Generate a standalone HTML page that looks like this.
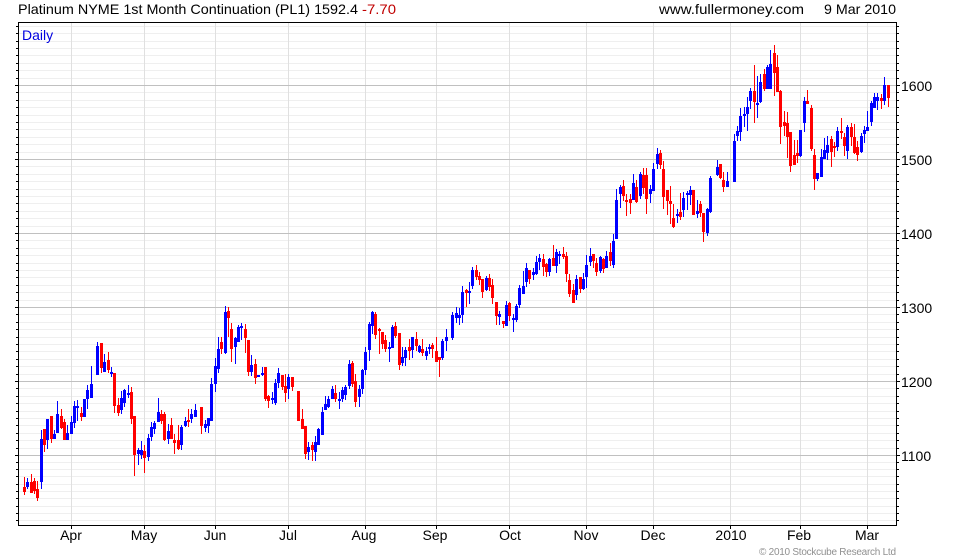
<!DOCTYPE html>
<html lang="en">
<head>
<meta charset="utf-8">
<title>Platinum NYME 1st Month Continuation</title>
<style>
html,body{margin:0;padding:0;background:#fff}
svg{display:block}
text{font-family:"Liberation Sans",Arial,sans-serif;font-size:14px;fill:#000}
</style>
</head>
<body>
<svg width="980" height="560" viewBox="0 0 980 560" xmlns="http://www.w3.org/2000/svg" shape-rendering="crispEdges">
<defs>
<path id="m" d="M0 26.5H980M0 33.5H980M0 41.5H980M0 48.5H980M0 55.5H980M0 63.5H980M0 70.5H980M0 78.5H980M0 92.5H980M0 100.5H980M0 107.5H980M0 115.5H980M0 122.5H980M0 129.5H980M0 137.5H980M0 144.5H980M0 152.5H980M0 166.5H980M0 174.5H980M0 181.5H980M0 189.5H980M0 196.5H980M0 203.5H980M0 211.5H980M0 218.5H980M0 226.5H980M0 240.5H980M0 248.5H980M0 255.5H980M0 263.5H980M0 270.5H980M0 277.5H980M0 285.5H980M0 292.5H980M0 300.5H980M0 314.5H980M0 322.5H980M0 329.5H980M0 337.5H980M0 344.5H980M0 351.5H980M0 359.5H980M0 366.5H980M0 374.5H980M0 388.5H980M0 396.5H980M0 403.5H980M0 411.5H980M0 418.5H980M0 425.5H980M0 433.5H980M0 440.5H980M0 448.5H980M0 462.5H980M0 469.5H980M0 476.5H980M0 484.5H980M0 491.5H980M0 498.5H980M0 506.5H980M0 513.5H980M0 520.5H980"/>
<path id="j" d="M0 85.5H980M0 159.5H980M0 233.5H980M0 307.5H980M0 381.5H980M0 455.5H980"/>
</defs>
<use href="#m" fill="none" stroke="#efefef" stroke-dasharray="0 19 877 84"/>
<path fill="none" stroke="#e0e0e0" d="M71.5 23V525M144.5 23V525M215.5 23V525M288.5 23V525M365.5 23V525M436.5 23V525M509.5 23V525M586.5 23V525M653.5 23V525M730.5 23V525M800.5 23V525M867.5 23V525"/>
<use href="#j" fill="none" stroke="#c0c0c0" stroke-dasharray="0 19 877 84"/>

<path fill="#f00" d="M23 487H26V492H23zM24 477H25V495H24z"/>
<path fill="#00f" d="M26 482H29V487H26zM27 478H28V489H27z"/>
<path fill="#f00" d="M30 482H33V493H30zM31 474H32V493H31zM33 481H36V491H33zM34 478H35V494H34zM36 489H39V498H36zM37 481H38V501H37z"/>
<path fill="#00f" d="M40 439H43V482H40zM41 430H42V489H41z"/>
<path fill="#f00" d="M43 429H46V445H43zM44 429H45V452H44z"/>
<path fill="#00f" d="M46 419H49V440H46zM47 419H48V449H47z"/>
<path fill="#f00" d="M50 416H53V439H50zM51 416H52V443H51z"/>
<path fill="#00f" d="M53 434H56V439H53zM54 430H55V439H54zM56 414H59V433H56zM57 401H58V433H57z"/>
<path fill="#f00" d="M60 416H63V428H60zM61 409H62V429H61zM63 422H66V440H63zM64 419H65V440H64z"/>
<path fill="#00f" d="M66 433H69V440H66zM67 425H68V440H67zM70 422H73V434H70zM71 416H72V434H71zM73 406H76V423H73zM74 401H75V428H74zM76 406H79V408H76zM77 400H78V421H77z"/>
<path fill="#f00" d="M80 413H83V417H80zM81 407H82V421H81z"/>
<path fill="#00f" d="M83 399H86V417H83zM84 399H85V417H84zM86 390H89V399H86zM87 385H88V409H87zM90 384H93V398H90zM91 366H92V398H91zM96 346H99V375H96zM97 342H98V375H97z"/>
<path fill="#f00" d="M100 343H103V368H100zM101 343H102V373H101z"/>
<path fill="#00f" d="M103 362H106V372H103zM104 354H105V372H104z"/>
<path fill="#f00" d="M107 360H110V370H107zM108 352H109V373H108z"/>
<path fill="#00f" d="M110 372H113V374H110zM111 367H112V377H111z"/>
<path fill="#f00" d="M113 373H116V406H113zM114 373H115V413H114zM117 405H120V413H117zM118 398H119V416H118z"/>
<path fill="#00f" d="M120 398H123V410H120zM121 391H122V414H121zM123 390H126V403H123zM124 389H125V407H124zM127 393H130V395H127zM128 385H129V398H128z"/>
<path fill="#f00" d="M130 392H133V419H130zM131 387H132V424H131zM133 416H136V455H133zM134 416H135V476H134z"/>
<path fill="#00f" d="M137 450H140V454H137zM138 448H139V465H138zM140 450H143V455H140zM141 441H142V459H141z"/>
<path fill="#f00" d="M143 451H146V458H143zM144 445H145V473H144z"/>
<path fill="#00f" d="M147 438H150V457H147zM148 434H149V461H148zM150 427H153V437H150zM151 422H152V441H151zM153 423H156V429H153zM154 421H155V434H154zM157 412H160V422H157zM158 398H159V422H158z"/>
<path fill="#f00" d="M160 414H163V421H160zM161 410H162V424H161zM163 414H166V440H163zM164 412H165V441H164z"/>
<path fill="#00f" d="M167 431H170V439H167zM168 424H169V444H168z"/>
<path fill="#f00" d="M170 425H173V439H170zM171 418H172V439H171zM173 440H176V443H173zM174 434H175V454H174zM177 440H180V449H177zM178 425H179V450H178z"/>
<path fill="#00f" d="M180 427H183V445H180zM181 425H182V450H181zM184 421H187V426H184zM185 417H186V427H185z"/>
<path fill="#f00" d="M187 420H190V422H187zM188 409H189V427H188z"/>
<path fill="#00f" d="M190 414H193V419H190zM191 409H192V423H191zM194 410H197V417H194zM195 404H196V417H195z"/>
<path fill="#f00" d="M200 407H203V426H200zM201 407H202V434H201z"/>
<path fill="#00f" d="M204 424H207V428H204zM205 420H206V432H205zM207 418H210V426H207zM208 418H209V433H208zM210 384H213V421H210zM211 378H212V421H211zM214 366H217V384H214zM215 358H216V392H215zM217 349H220V369H217zM218 337H219V373H218z"/>
<path fill="#f00" d="M220 342H223V349H220zM221 337H222V354H221z"/>
<path fill="#00f" d="M224 312H227V353H224zM225 306H226V354H225z"/>
<path fill="#f00" d="M227 311H230V318H227zM228 307H229V337H228zM230 329H233V349H230zM231 323H232V362H231z"/>
<path fill="#00f" d="M234 338H237V347H234zM235 337H236V364H235zM237 327H240V342H237zM238 325H239V342H238zM240 326H243V328H240zM241 323H242V340H241z"/>
<path fill="#f00" d="M244 329H247V338H244zM245 324H246V353H245zM247 340H250V372H247zM248 340H249V376H248z"/>
<path fill="#00f" d="M250 365H253V372H250zM251 355H252V376H251z"/>
<path fill="#f00" d="M254 364H257V378H254zM255 359H256V384H255z"/>
<path fill="#00f" d="M257 375H260V377H257zM258 375H259V377H258zM261 373H264V375H261zM262 367H263V376H262z"/>
<path fill="#f00" d="M264 367H267V399H264zM265 367H266V401H265zM267 396H270V401H267zM268 395H269V408H268z"/>
<path fill="#00f" d="M271 398H274V400H271zM272 392H273V404H272zM274 383H277V403H274zM275 379H276V405H275zM277 373H280V383H277zM278 368H279V388H278z"/>
<path fill="#f00" d="M281 375H284V387H281zM282 375H283V390H282zM284 386H287V393H284zM285 374H286V402H285z"/>
<path fill="#00f" d="M287 377H290V389H287zM288 374H289V399H288z"/>
<path fill="#f00" d="M291 377H294V387H291zM292 377H293V391H292zM297 391H300V421H297zM298 391H299V421H298zM301 419H304V429H301zM302 409H303V429H302zM304 426H307V454H304zM305 426H306V459H305z"/>
<path fill="#00f" d="M307 447H310V452H307zM308 442H309V460H308z"/>
<path fill="#f00" d="M311 445H314V450H311zM312 442H313V461H312z"/>
<path fill="#00f" d="M314 442H317V452H314zM315 436H316V461H315zM317 429H320V445H317zM318 428H319V445H318zM321 412H324V435H321zM322 407H323V435H322zM324 404H327V410H324zM325 396H326V410H325zM327 399H330V407H327zM328 396H329V408H328zM331 389H334V399H331zM332 386H333V399H332z"/>
<path fill="#f00" d="M334 393H337V399H334zM335 385H336V402H335z"/>
<path fill="#00f" d="M338 399H341V401H338zM339 392H340V409H339zM341 390H344V399H341zM342 387H343V402H342zM344 387H347V395H344zM345 385H346V400H345zM348 364H351V386H348zM349 360H350V389H349z"/>
<path fill="#f00" d="M351 363H354V384H351zM352 361H353V387H352zM354 381H357V402H354zM355 374H356V407H355z"/>
<path fill="#00f" d="M358 389H361V397H358zM359 385H360V407H359zM361 370H364V389H361zM362 369H363V394H362zM364 352H367V370H364zM365 347H366V375H365zM368 324H371V350H368zM369 322H370V361H369zM371 312H374V326H371zM372 311H373V334H372z"/>
<path fill="#f00" d="M374 314H377V335H374zM375 312H376V339H375zM378 329H381V331H378zM379 328H380V354H379zM381 332H384V344H381zM382 332H383V349H382zM384 340H387V349H384zM385 335H386V352H385z"/>
<path fill="#00f" d="M388 347H391V349H388zM389 342H390V362H389zM391 327H394V348H391zM392 325H393V348H392z"/>
<path fill="#f00" d="M394 326H397V336H394zM395 322H396V338H395zM398 333H401V365H398zM399 333H400V370H399z"/>
<path fill="#00f" d="M401 357H404V363H401zM402 347H403V366H402zM404 350H407V358H404zM405 347H406V366H405z"/>
<path fill="#f00" d="M408 347H411V351H408zM409 339H410V360H409z"/>
<path fill="#00f" d="M411 337H414V350H411zM412 337H413V358H412z"/>
<path fill="#f00" d="M415 339H418V346H415zM416 332H417V351H416z"/>
<path fill="#00f" d="M418 346H421V352H418zM419 345H420V353H419z"/>
<path fill="#f00" d="M421 349H424V353H421zM422 339H423V356H422z"/>
<path fill="#00f" d="M425 351H428V356H425zM426 347H427V360H426zM428 347H431V349H428zM429 344H430V354H429z"/>
<path fill="#f00" d="M431 345H434V349H431zM432 343H433V358H432zM435 351H438V362H435zM436 337H437V362H436zM438 357H441V360H438zM439 357H440V377H439z"/>
<path fill="#00f" d="M441 341H444V358H441zM442 339H443V360H442zM445 337H448V341H445zM446 329H447V351H446zM451 315H454V338H451zM452 312H453V340H452zM455 313H458V318H455zM456 307H457V323H456zM458 315H461V318H458zM459 308H460V325H459zM461 292H464V315H461zM462 286H463V323H462z"/>
<path fill="#f00" d="M465 290H468V293H465zM466 289H467V307H466z"/>
<path fill="#00f" d="M468 291H471V293H468zM469 282H470V304H469zM471 270H474V286H471zM472 267H473V289H472z"/>
<path fill="#f00" d="M475 270H478V277H475zM476 265H477V280H476zM478 276H481V280H478zM479 272H480V285H479zM481 279H484V292H481zM482 279H483V298H482z"/>
<path fill="#00f" d="M485 278H488V290H485zM486 276H487V291H486z"/>
<path fill="#f00" d="M488 278H491V287H488zM489 274H490V291H489zM491 285H494V298H491zM492 279H493V304H492zM495 302H498V316H495zM496 302H497V325H496z"/>
<path fill="#00f" d="M498 314H501V317H498zM499 311H500V325H499z"/>
<path fill="#f00" d="M502 321H505V324H502zM503 321H504V328H503z"/>
<path fill="#00f" d="M505 305H508V326H505zM506 301H507V326H506z"/>
<path fill="#f00" d="M508 303H511V316H508zM509 302H510V321H509z"/>
<path fill="#00f" d="M512 318H515V320H512zM513 314H514V332H513zM515 306H518V320H515zM516 304H517V322H516zM518 288H521V305H518zM519 285H520V308H519zM522 286H525V294H522zM523 271H524V294H523zM525 268H528V282H525zM526 263H527V287H526z"/>
<path fill="#f00" d="M528 270H531V279H528zM529 270H530V284H529z"/>
<path fill="#00f" d="M532 272H535V275H532zM533 268H534V280H533zM535 262H538V274H535zM536 256H537V275H536zM538 258H541V262H538zM539 254H540V270H539z"/>
<path fill="#f00" d="M542 259H545V267H542zM543 254H544V276H543zM545 264H548V272H545zM546 263H547V277H546z"/>
<path fill="#00f" d="M548 259H551V272H548zM549 258H550V276H549z"/>
<path fill="#f00" d="M552 258H555V266H552zM553 245H554V266H553z"/>
<path fill="#00f" d="M555 252H558V266H555zM556 249H557V273H556zM558 254H561V256H558zM559 251H560V264H559z"/>
<path fill="#f00" d="M562 254H565V257H562zM563 247H564V259H563zM565 256H568V274H565zM566 252H567V282H566zM568 280H571V294H568zM569 274H570V297H569zM572 290H575V303H572zM573 284H574V303H573z"/>
<path fill="#00f" d="M575 279H578V295H575zM576 275H577V300H576z"/>
<path fill="#f00" d="M579 277H582V289H579zM580 277H581V293H580z"/>
<path fill="#00f" d="M582 279H585V289H582zM583 273H584V290H583zM585 265H588V277H585zM586 255H587V288H586zM589 256H592V262H589zM590 248H591V266H590z"/>
<path fill="#f00" d="M592 254H595V261H592zM593 254H594V268H593zM595 263H598V272H595zM596 258H597V276H596z"/>
<path fill="#00f" d="M599 257H602V271H599zM600 256H601V273H600z"/>
<path fill="#f00" d="M602 259H605V269H602zM603 258H604V273H603z"/>
<path fill="#00f" d="M605 256H608V268H605zM606 251H607V268H606z"/>
<path fill="#f00" d="M609 252H612V261H609zM610 243H611V266H610z"/>
<path fill="#00f" d="M612 241H615V265H612zM613 234H614V268H613zM615 200H618V239H615zM616 189H617V239H616zM619 187H622V194H619zM620 185H621V208H620z"/>
<path fill="#f00" d="M622 186H625V196H622zM623 180H624V201H623zM625 200H628V202H625zM626 194H627V216H626zM629 199H632V203H629zM630 194H631V214H630z"/>
<path fill="#00f" d="M632 183H635V200H632zM633 174H634V200H633z"/>
<path fill="#f00" d="M635 187H638V202H635zM636 180H637V203H636z"/>
<path fill="#00f" d="M639 174H642V196H639zM640 172H641V199H640z"/>
<path fill="#f00" d="M642 175H645V188H642zM643 168H644V194H643zM645 175H648V199H645zM646 168H647V214H646z"/>
<path fill="#00f" d="M649 189H652V194H649zM650 185H651V203H650zM652 169H655V191H652zM653 163H654V191H653zM656 154H659V164H656zM657 148H658V169H657z"/>
<path fill="#f00" d="M659 153H662V165H659zM660 150H661V169H660zM662 169H665V197H662zM663 161H664V209H663zM666 190H669V201H666zM667 190H668V215H667zM669 201H672V204H669zM670 186H671V224H670zM672 218H675V227H672zM673 204H674V228H673z"/>
<path fill="#00f" d="M676 214H679V216H676zM677 209H678V223H677z"/>
<path fill="#f00" d="M679 212H682V217H679zM680 193H681V220H680z"/>
<path fill="#00f" d="M682 198H685V210H682zM683 192H684V217H683zM686 193H689V195H686zM687 191H688V210H687zM689 190H692V195H689zM690 186H691V205H690z"/>
<path fill="#f00" d="M692 190H695V215H692zM693 190H694V215H693z"/>
<path fill="#00f" d="M696 211H699V214H696zM697 200H698V218H697z"/>
<path fill="#f00" d="M699 204H702V213H699zM700 201H701V217H700zM702 213H705V232H702zM703 213H704V242H703z"/>
<path fill="#00f" d="M706 209H709V233H706zM707 208H708V236H707zM709 178H712V212H709zM710 176H711V213H710zM716 167H719V175H716zM717 160H718V176H717z"/>
<path fill="#f00" d="M719 164H722V178H719zM720 164H721V179H720zM722 180H725V187H722zM723 172H724V192H723z"/>
<path fill="#00f" d="M726 181H729V187H726zM727 172H728V187H727zM733 141H736V182H733zM734 134H735V182H734zM736 131H739V136H736zM737 126H738V141H737zM739 116H742V132H739zM740 108H741V141H740zM743 114H746V116H743zM744 107H745V127H744zM746 107H749V114H746zM747 97H748V131H747zM749 91H752V101H749zM750 88H751V109H750z"/>
<path fill="#f00" d="M753 91H756V102H753zM754 65H755V123H754z"/>
<path fill="#00f" d="M756 103H759V105H756zM757 76H758V118H757zM759 82H762V102H759zM760 74H761V103H760z"/>
<path fill="#f00" d="M763 74H766V89H763zM764 69H765V91H764z"/>
<path fill="#00f" d="M766 67H769V89H766zM767 65H768V89H767zM769 64H772V89H769zM770 50H771V89H770z"/>
<path fill="#f00" d="M773 53H776V73H773zM774 45H775V96H774zM776 67H779V92H776zM777 55H778V92H777zM779 91H782V127H779zM780 90H781V144H780zM783 122H786V126H783zM784 111H785V136H784zM786 123H789V137H786zM787 112H788V158H787zM789 132H792V166H789zM790 132H791V172H790zM793 155H796V165H793zM794 140H795V165H794zM796 153H799V156H796zM797 140H798V163H797z"/>
<path fill="#00f" d="M799 130H802V156H799zM800 130H801V157H800zM803 101H806V123H803zM804 97H805V132H804z"/>
<path fill="#f00" d="M806 101H809V104H806zM807 90H808V104H807zM810 108H813V149H810zM811 105H812V151H811zM813 155H816V179H813zM814 149H815V190H814z"/>
<path fill="#00f" d="M816 173H819V179H816zM817 173H818V181H817zM820 157H823V177H820zM821 149H822V177H821zM823 150H826V159H823zM824 138H825V159H824zM826 145H829V153H826zM827 136H828V160H827z"/>
<path fill="#f00" d="M830 139H833V152H830zM831 136H832V167H831zM833 146H836V148H833zM834 142H835V157H834z"/>
<path fill="#00f" d="M836 131H839V147H836zM837 127H838V151H837z"/>
<path fill="#f00" d="M840 131H843V133H840zM841 118H842V139H841zM843 137H846V146H843zM844 133H845V156H844z"/>
<path fill="#00f" d="M846 127H849V151H846zM847 125H848V159H847z"/>
<path fill="#f00" d="M850 127H853V137H850zM851 123H852V146H851zM853 137H856V153H853zM854 124H855V154H854zM856 147H859V155H856zM857 141H858V161H857z"/>
<path fill="#00f" d="M860 136H863V152H860zM861 133H862V153H861zM863 130H866V134H863zM864 126H865V143H864zM866 127H869V131H866zM867 111H868V131H867zM870 103H873V122H870zM871 101H872V126H871zM873 97H876V108H873zM874 93H875V108H874zM876 97H879V101H876zM877 93H878V110H877z"/>
<path fill="#f00" d="M880 98H883V101H880zM881 94H882V109H881z"/>
<path fill="#00f" d="M883 85H886V101H883zM884 77H885V105H884z"/>
<path fill="#f00" d="M887 85H890V98H887zM888 85H889V107H888z"/>

<use href="#m" fill="none" stroke="#000" stroke-dasharray="0 16 3 878 2 81"/>
<use href="#j" fill="none" stroke="#000" stroke-dasharray="0 15 4 878 3 80"/>
<path fill="none" stroke="#000" d="M18 22.5H897M18 525.5H897M18.5 22V526M896.5 22V526M71.5 526V529M144.5 526V529M215.5 526V529M288.5 526V529M365.5 526V529M436.5 526V529M509.5 526V529M586.5 526V529M653.5 526V529M730.5 526V529M800.5 526V529M867.5 526V529"/>

<g shape-rendering="auto">
<text x="18" y="14" textLength="340" lengthAdjust="spacingAndGlyphs">Platinum NYME 1st Month Continuation (PL1) 1592.4</text>
<text x="362" y="14" textLength="34" lengthAdjust="spacingAndGlyphs" style="fill:#c00000">-7.70</text>
<text x="659" y="14" textLength="145" lengthAdjust="spacingAndGlyphs">www.fullermoney.com</text>
<text x="824" y="14" textLength="72" lengthAdjust="spacingAndGlyphs">9 Mar 2010</text>
<text x="22" y="40" style="fill:#0000e0">Daily</text>
<text x="901" y="91">1600</text>
<text x="901" y="165">1500</text>
<text x="901" y="239">1400</text>
<text x="901" y="313">1300</text>
<text x="901" y="387">1200</text>
<text x="901" y="461">1100</text>
<g text-anchor="middle">
<text x="71" y="540">Apr</text>
<text x="144" y="540">May</text>
<text x="215" y="540">Jun</text>
<text x="288" y="540">Jul</text>
<text x="364" y="540">Aug</text>
<text x="435" y="540">Sep</text>
<text x="510" y="540">Oct</text>
<text x="586" y="540">Nov</text>
<text x="653" y="540">Dec</text>
<text x="731" y="540">2010</text>
<text x="799" y="540">Feb</text>
<text x="867" y="540">Mar</text>
</g>
<text x="759" y="555" textLength="137" lengthAdjust="spacing" style="font-size:10px;fill:#909090">© 2010 Stockcube Research Ltd</text>
</g>
</svg>
</body>
</html>
